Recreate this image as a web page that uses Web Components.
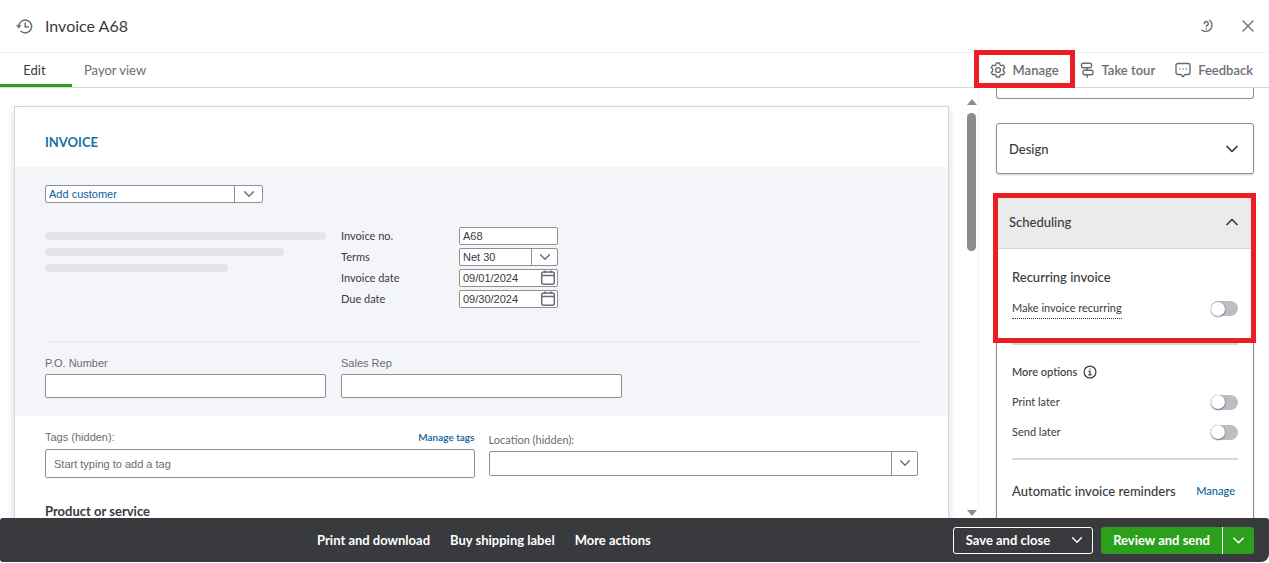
<!DOCTYPE html>
<html lang="en">
<head>
<meta charset="utf-8">
<title>Invoice A68</title>
<style>
  html, body { height: 100%; margin: 0; }
  body {
    background: #fff;
    color: #393a3d;
    font: 12px/16px Lato, "Open Sans", sans-serif;
  }
</style>
</head>
<body>
<invoice-app></invoice-app>

<script>
const base = `
  *, *::before, *::after { box-sizing: border-box; }
  :host { box-sizing: border-box; }
  button {
    margin: 0; padding: 0; border: 0;
    background: none; color: inherit; font: inherit;
    cursor: pointer;
  }
  a { color: #0b6299; text-decoration: none; }
  h1, h2, h3, p { margin: 0; font: inherit; }
`;

const icons = {
  history: `<path d="M2.700 8.500a6 6 0 1 1 2 4"/><path d="M.800 6.900h3.800L2.700 9.400z" fill="currentColor" stroke-width=".6"/><path d="M8.700 4.800v3.700h3"/>`,
  help: `<path d="M10.500 2.300a6.200 6.200 0 1 1-7.500 9.900"/><path d="M5.300 5.500a2 2 0 1 1 2.900 1.800c-.6.3-.9.500-.9 1.200M7.300 10.800v.1"/>`,
  close: `<path d="M3 3l10 10M13 3L3 13"/>`,
  gear: `<circle cx="8" cy="8" r="2.4"/><path d="M6.500 1h3l.5 1.900 1.300.8 1.900-.6 1.500 2.600-1.400 1.400v1.800l1.400 1.400-1.500 2.600-1.900-.6-1.300.8-.5 1.900h-3L6 13.100l-1.300-.8-1.900.6-1.500-2.600 1.400-1.400V7.100L1.300 5.700l1.500-2.600 1.900.6L6 2.900z"/>`,
  tour: `<rect x="2.500" y="1.200" width="10" height="4.600" rx="1.500"/><rect x="4" y="8.200" width="10" height="4.600" rx="1.500"/><path d="M8.200 5.800v2.400M8.200 12.800v2.400"/>`,
  feedback: `<path d="M3 1.500h10a2 2 0 0 1 2 2v7a2 2 0 0 1-2 2h-3l-2 2.300-2-2.300H3a2 2 0 0 1-2-2v-7a2 2 0 0 1 2-2z"/><path d="M4.800 7h.1M8 7h.1M11.200 7h.1"/>`,
  down: `<path d="M3 5.500l5 5 5-5"/>`,
  up: `<path d="M3 10.500l5-5 5 5"/>`,
  calendar: `<rect x="1.700" y="2" width="12.600" height="12.300" rx="2"/><path d="M2 5.500h12M5 1v1.500M11 1v1.500"/>`,
  info: `<circle cx="8" cy="8" r="6.800"/><path d="M8 7.200v4M6.800 7.400H8M6.600 11.200h2.800M8 4.600v.3"/>`,
};

class SvgIcon extends HTMLElement {
  connectedCallback () {
    const size   = this.getAttribute("size") || 16;
    const stroke = this.getAttribute("stroke") || 1.4;
    this.attachShadow({mode: "open"}).innerHTML = `
      <style>
        :host { display: inline-flex; flex: none; }
        svg { fill: none; stroke: currentColor; stroke-linecap: round; stroke-linejoin: round; }
      </style>
      <svg width="${size}" height="${size}" viewBox="0 0 16 16"
        stroke-width="${stroke}" aria-hidden="true">${icons[this.getAttribute("name")]}</svg>`;
  }
}

// A labelled text box, drop-down or date box. "inline" puts the label beside it.
class FormField extends HTMLElement {
  connectedCallback () {
    const kind  = this.getAttribute("kind") || "text";
    const label = this.getAttribute("label");
    const value = this.getAttribute("value") || "";
    const hint  = this.getAttribute("placeholder") || "";
    const bare  = this.hasAttribute("bare");
    const aria  = bare ? `aria-label="${label}"` : "";

    let control = `<input id="control" type="text" value="${value}" placeholder="${hint}" ${aria}>`;
    if (kind == "select") {
      control = `
        <select id="control" ${aria}><option>${value}</option></select>
        <span class="end"><svg-icon name="down" size="14" stroke="1.6"></svg-icon></span>`;
    }
    if (kind == "date") {
      control += `<button aria-label="Open calendar"><svg-icon name="calendar" stroke="1.5"></svg-icon></button>`;
    }

    this.attachShadow({mode: "open"}).innerHTML = `
      <style>
        ${base}
        :host { display: block; }
        :host([inline]) { display: grid; grid-template-columns: 118px 99px; align-items: center; }
        .top {
          display: flex; justify-content: space-between;
          margin-bottom: var(--label-gap, 3px);
          color: #6b6c72;
          font-family: var(--label-font, inherit);
          font-size: 11px;
        }
        :host([inline]) .top { margin: 0; color: #393a3d; font-family: inherit; }
        .box {
          display: flex; align-items: stretch;
          height: var(--box-height, 18px);
          border: 1px solid #8d9096;
          border-radius: 2px;
          background: #fff;
          color: #6b6c72;
          overflow: hidden;
        }
        input, select {
          flex: 1; min-width: 0; width: 100%;
          margin: 0; padding: 0 0 0 var(--inset, 3px);
          border: 0; outline: 0;
          background: none;
          appearance: none;
          color: var(--value-color, #393a3d);
          font: 11px "Liberation Sans", Arial, sans-serif;
        }
        input::placeholder { color: #6b6c72; opacity: 1; }
        .end {
          flex: none; width: var(--end-width, 26px);
          display: flex; align-items: center; justify-content: center;
          border-left: 1px solid #8d9096;
        }
        button { display: flex; align-items: center; padding: 0 1px; }
      </style>
      ${bare ? "" : `<div class="top"><label for="control">${label}</label><slot></slot></div>`}
      <div class="box">${control}</div>`;
  }
}

class ToggleSwitch extends HTMLElement {
  connectedCallback () {
    this.attachShadow({mode: "open"}).innerHTML = `
      <style>
        ${base}
        :host { display: flex; justify-content: space-between; align-items: center; font-size: 11px; }
        :host([dotted]) label { border-bottom: 1px dotted #393a3d; line-height: 20px; }
        input {
          appearance: none;
          display: flex; align-items: center;
          width: 27px; height: 15px; margin: 0;
          border-radius: 8px;
          background: #babec5;
        }
        input::before {
          content: "";
          width: 14px; height: 14px;
          border-radius: 50%;
          background: #fff;
          box-shadow: 0 1px 2px #0006, 0 0 1px #0006;
        }
        input:checked { background: #2ca01c; justify-content: flex-end; }
      </style>
      <label for="toggle"><slot></slot></label>
      <input id="toggle" type="checkbox">`;
  }
}

class AccordionCard extends HTMLElement {
  connectedCallback () {
    const open = this.hasAttribute("open");
    this.attachShadow({mode: "open"}).innerHTML = `
      <style>
        ${base}
        :host {
          display: block;
          border: 1px solid #8d9096;
          border-radius: 3px;
          background: #fff;
          box-shadow: 0 1px 2px #0003;
        }
        button {
          display: flex; justify-content: space-between; align-items: center;
          width: 100%; height: 49px; padding: 0 13px 0 12px;
          font-size: 13px; font-weight: 500;
        }
        :host([open]) button { height: 54px; background: #ebebeb; border-bottom: 1px solid #d4d7dc; }
        .content { padding: 0 15px; }
      </style>
      <button aria-expanded="${open}">${this.getAttribute("heading")}
        <svg-icon name="${open ? "up" : "down"}" stroke="1.7"></svg-icon></button>
      ${open ? `<div class="content"><slot></slot></div>` : ""}`;
  }
}

class AppHeader extends HTMLElement {
  connectedCallback () {
    this.attachShadow({mode: "open"}).innerHTML = `
      <style>
        ${base}
        :host { display: block; flex: none; }
        .title {
          display: flex; align-items: center; gap: 12px;
          height: 53px; padding: 0 13px 0 16px;
          border-bottom: 1px solid #f0f1f3;
          color: #6b6c72;
        }
        h1 { flex: 1; color: #393a3d; font-size: 16px; line-height: 20px; }
        .title div { display: flex; gap: 25px; }
        .title button { display: flex; }
        .bar {
          display: flex; justify-content: space-between;
          height: 35px; padding-right: 16px;
          border-bottom: 1px solid #d4d7dc;
          color: #6b6c72;
          font-size: 13px;
        }
        nav, .tools { display: flex; }
        nav button { padding: 0 12px; }
        nav button:first-child {
          width: 72px;
          padding: 3px 3px 0 0;
          border-bottom: 3px solid #2ca01c;
          color: #393a3d;
        }
        .tools { gap: 20px; font-weight: 600; }
        .tools button { position: relative; display: flex; align-items: center; gap: 7px; }
        .marked::after {
          content: "";
          position: absolute; inset: -3px -16px -1px;
          border: 5px solid #ee1c25;
        }
      </style>
      <div class="title">
        <svg-icon name="history" size="17"></svg-icon>
        <h1>Invoice A68</h1>
        <div>
          <button aria-label="Help"><svg-icon name="help"></svg-icon></button>
          <button aria-label="Close"><svg-icon name="close"></svg-icon></button>
        </div>
      </div>
      <div class="bar">
        <nav><button>Edit</button><button>Payor view</button></nav>
        <div class="tools">
          <button class="marked"><svg-icon name="gear"></svg-icon>Manage</button>
          <button><svg-icon name="tour"></svg-icon>Take tour</button>
          <button><svg-icon name="feedback"></svg-icon>Feedback</button>
        </div>
      </div>`;
  }
}

class InvoiceSheet extends HTMLElement {
  connectedCallback () {
    this.attachShadow({mode: "open"}).innerHTML = `
      <style>
        ${base}
        :host {
          display: block;
          border: 1px solid #d4d7dc;
          background: #fff;
          box-shadow: 0 4px 8px #d4d7e0;
        }
        h2 {
          padding: 27px 30px 17px;
          color: #1673a6;
          font-size: 13px; font-weight: 700;
        }
        .details { padding: 18px 30px; background: #f4f5f9; }
        .customer { width: 218px; --value-color: #0b6299; --end-width: 28px; }
        .summary { display: grid; grid-template-columns: 281px auto; gap: 15px; margin: 24px 0 33px; justify-content: start; }
        .lines { display: grid; gap: 8px; align-content: start; padding-top: 5px; }
        .lines span { height: 8px; border-radius: 4px; background: #e3e5e8; }
        .lines span:nth-child(2) { width: 85%; }
        .lines span:nth-child(3) { width: 65%; }
        .fields { display: grid; gap: 3px; }
        .extra {
          display: grid; grid-template-columns: 281px 281px; gap: 15px;
          padding-top: 13px;
          border-top: 1px solid #e3e5e8;
          --box-height: 24px;
          --label-font: "Liberation Sans", Arial, sans-serif;
        }
        .tags {
          display: grid; grid-template-columns: 1fr 1fr; gap: 14px;
          align-items: center;
          padding: 13px 30px 26px;
        }
        .tags > :first-child {
          --box-height: 29px;
          --inset: 8px;
          --label-gap: 4px;
          --label-font: "Liberation Sans", Arial, sans-serif;
        }
        .tags > :last-child { --box-height: 25px; }
        a { font: 600 10px/16px Lato, sans-serif; }
        h3 { padding: 0 30px; font-size: 13px; font-weight: 700; line-height: 14px; }
      </style>
      <h2>INVOICE</h2>
      <div class="details">
        <form-field class="customer" kind="select" label="Customer" value="Add customer" bare></form-field>
        <div class="summary">
          <div class="lines"><span></span><span></span><span></span></div>
          <div class="fields">
            <form-field inline label="Invoice no." value="A68"></form-field>
            <form-field inline label="Terms" kind="select" value="Net 30"></form-field>
            <form-field inline label="Invoice date" kind="date" value="09/01/2024"></form-field>
            <form-field inline label="Due date" kind="date" value="09/30/2024"></form-field>
          </div>
        </div>
        <div class="extra">
          <form-field label="P.O. Number"></form-field>
          <form-field label="Sales Rep"></form-field>
        </div>
      </div>
      <div class="tags">
        <form-field label="Tags (hidden):" placeholder="Start typing to add a tag"><a href="#">Manage tags</a></form-field>
        <form-field label="Location (hidden):" kind="select"></form-field>
      </div>
      <h3>Product or service</h3>`;
  }
}

class ScrollTrack extends HTMLElement {
  connectedCallback () {
    this.attachShadow({mode: "open"}).innerHTML = `
      <style>
        ${base}
        :host {
          display: flex; flex-direction: column; align-items: center; gap: 8px;
          flex: none; width: 13px; padding: 11px 0 2px;
        }
        i { border: 5px solid transparent; }
        .up { border-top: 0; border-bottom: 6px solid #8b8b8b; }
        .down { border-bottom: 0; border-top: 6px solid #8b8b8b; margin-top: auto; }
        .thumb { width: 9px; height: 33%; border-radius: 5px; background: #8b8b8b; }
      </style>
      <i class="up"></i><div class="thumb"></div><i class="down"></i>`;
  }
}

class ManagePanel extends HTMLElement {
  connectedCallback () {
    this.attachShadow({mode: "open"}).innerHTML = `
      <style>
        ${base}
        :host {
          display: flex; flex-direction: column; gap: 24px;
          flex: none; width: 291px; padding: 0 15px 0 17px;
          overflow: hidden;
          border-left: 1px solid #f4f5f8;
        }
        .previous {
          flex: none; height: 11px;
          border: 1px solid #8d9096; border-top: 0;
          border-radius: 0 0 3px 3px;
        }
        accordion-card { flex: none; }
        .scheduling { position: relative; margin-top: -4px; }
        .scheduling::after {
          content: "";
          position: absolute; inset: -1px -2px auto -3px; height: 150px;
          border: 5px solid #ee1c25;
          pointer-events: none;
        }
        section { padding: 19px 0 18px; border-bottom: 2px solid #d4d7dc; }
        section:last-child { border: 0; }
        h3 { font-size: 13px; font-weight: 500; }
        .recurring { padding: 20px 0 24px; }
        .recurring h3 { margin-bottom: 13px; }
        .more h3 { display: flex; align-items: center; gap: 6px; font-size: 11px; font-weight: 500; }
        .more toggle-switch { margin-top: 14px; }
        .reminders { display: flex; justify-content: space-between; padding: 23px 3px 40px 0; }
        .reminders a { font-size: 11px; font-weight: 500; }
      </style>
      <div class="previous"></div>
      <accordion-card heading="Design"></accordion-card>
      <div class="scheduling">
        <accordion-card heading="Scheduling" open>
          <section class="recurring">
            <h3>Recurring invoice</h3>
            <toggle-switch dotted>Make invoice recurring</toggle-switch>
          </section>
          <section class="more">
            <h3>More options <svg-icon name="info" size="14"></svg-icon></h3>
            <toggle-switch>Print later</toggle-switch>
            <toggle-switch>Send later</toggle-switch>
          </section>
          <section class="reminders">
            <h3>Automatic invoice reminders</h3>
            <a href="#">Manage</a>
          </section>
        </accordion-card>
      </div>`;
  }
}

class AppFooter extends HTMLElement {
  connectedCallback () {
    this.attachShadow({mode: "open"}).innerHTML = `
      <style>
        ${base}
        :host {
          display: flex; align-items: center; gap: 8px;
          flex: none; height: 44px; margin-bottom: 1px; padding: 0 15px;
          border-radius: 3px 3px 8px 3px;
          background: #393a3d;
          color: #fff;
          font-size: 13px; font-weight: 700;
        }
        nav { flex: 1; display: flex; justify-content: center; gap: 20px; padding-left: 8px; }
        .split { display: flex; height: 27px; border-radius: 3px; overflow: hidden; }
        .split button { display: flex; align-items: center; padding: 0 8px; }
        .split button:first-child { padding: 0 12px; }
        .save { border: 1px solid #fff; }
        .send { background: #2ca01c; }
        .send button + button { border-left: 1px solid #fff; }
      </style>
      <nav>
        <button>Print and download</button>
        <button>Buy shipping label</button>
        <button>More actions</button>
      </nav>
      <div class="split save">
        <button>Save and close</button>
        <button aria-label="More save options"><svg-icon name="down" size="14" stroke="1.6"></svg-icon></button>
      </div>
      <div class="split send">
        <button>Review and send</button>
        <button aria-label="More send options"><svg-icon name="down" size="15" stroke="1.6"></svg-icon></button>
      </div>`;
  }
}

class InvoiceApp extends HTMLElement {
  connectedCallback () {
    this.attachShadow({mode: "open"}).innerHTML = `
      <style>
        ${base}
        :host { display: flex; flex-direction: column; height: 100vh; overflow: hidden; }
        main { flex: 1; min-height: 0; display: flex; }
        .canvas { flex: 1; min-width: 0; padding: 18px 16px 0 14px; overflow: hidden; }
      </style>
      <app-header></app-header>
      <main>
        <div class="canvas"><invoice-sheet></invoice-sheet></div>
        <scroll-track></scroll-track>
        <manage-panel></manage-panel>
      </main>
      <app-footer></app-footer>`;
  }
}

customElements.define("svg-icon", SvgIcon);
customElements.define("form-field", FormField);
customElements.define("toggle-switch", ToggleSwitch);
customElements.define("accordion-card", AccordionCard);
customElements.define("app-header", AppHeader);
customElements.define("invoice-sheet", InvoiceSheet);
customElements.define("scroll-track", ScrollTrack);
customElements.define("manage-panel", ManagePanel);
customElements.define("app-footer", AppFooter);
customElements.define("invoice-app", InvoiceApp);
</script>
</body>
</html>
